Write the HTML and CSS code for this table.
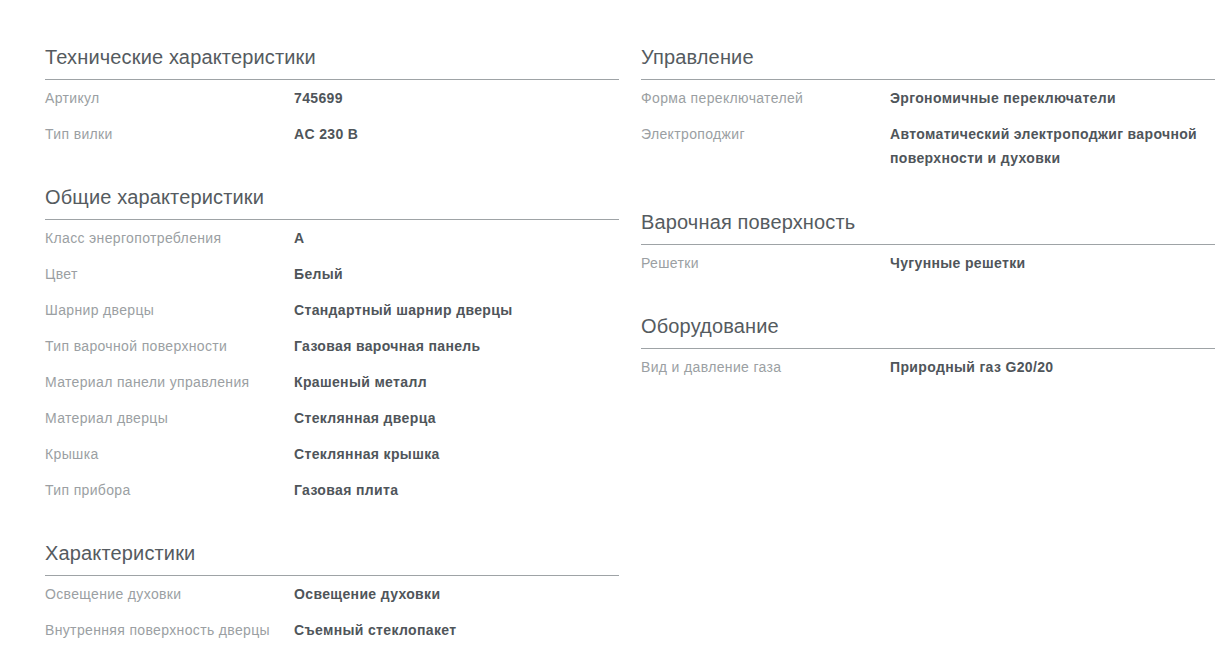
FILE: index.html
```html
<!DOCTYPE html>
<html lang="ru">
<head>
<meta charset="utf-8">
<title>Характеристики</title>
<link rel="stylesheet" href="styles.css">
</head>
<body>
<div class="specs">
  <div class="col">
    <section class="group">
      <h2 class="group-title">Технические характеристики</h2>
      <div class="row"><div class="label">Артикул</div><div class="value">745699</div></div>
      <div class="row"><div class="label">Тип вилки</div><div class="value">AC 230 B</div></div>
    </section>
    <section class="group">
      <h2 class="group-title">Общие характеристики</h2>
      <div class="row"><div class="label">Класс энергопотребления</div><div class="value">A</div></div>
      <div class="row"><div class="label">Цвет</div><div class="value">Белый</div></div>
      <div class="row"><div class="label">Шарнир дверцы</div><div class="value">Стандартный шарнир дверцы</div></div>
      <div class="row"><div class="label">Тип варочной поверхности</div><div class="value">Газовая варочная панель</div></div>
      <div class="row"><div class="label">Материал панели управления</div><div class="value">Крашеный металл</div></div>
      <div class="row"><div class="label">Материал дверцы</div><div class="value">Стеклянная дверца</div></div>
      <div class="row"><div class="label">Крышка</div><div class="value">Стеклянная крышка</div></div>
      <div class="row"><div class="label">Тип прибора</div><div class="value">Газовая плита</div></div>
    </section>
    <section class="group">
      <h2 class="group-title">Характеристики</h2>
      <div class="row"><div class="label">Освещение духовки</div><div class="value">Освещение духовки</div></div>
      <div class="row"><div class="label">Внутренняя поверхность дверцы</div><div class="value">Съемный стеклопакет</div></div>
    </section>
  </div>
  <div class="col">
    <section class="group">
      <h2 class="group-title">Управление</h2>
      <div class="row"><div class="label">Форма переключателей</div><div class="value">Эргономичные переключатели</div></div>
      <div class="row row--multi"><div class="label">Электроподжиг</div><div class="value">Автоматический электроподжиг варочной поверхности и духовки</div></div>
    </section>
    <section class="group">
      <h2 class="group-title">Варочная поверхность</h2>
      <div class="row"><div class="label">Решетки</div><div class="value">Чугунные решетки</div></div>
    </section>
    <section class="group">
      <h2 class="group-title">Оборудование</h2>
      <div class="row"><div class="label">Вид и давление газа</div><div class="value">Природный газ G20/20</div></div>
    </section>
  </div>
</div>
</body>
</html>
```
FILE: styles.css
```css
html, body {
  margin: 0;
  padding: 0;
  background: #ffffff;
}
body {
  font-family: "Liberation Sans", Arial, sans-serif;
}
.specs {
  display: grid;
  grid-template-columns: 574px 574px;
  column-gap: 22px;
  padding: 12px 2px 0 45px;
}
.group {
  margin-top: 31px;
}
.group-title {
  margin: 0;
  font-size: 20px;
  font-weight: normal;
  line-height: 28px;
  letter-spacing: 0.15px;
  color: #555b60;
  padding-bottom: 8px;
  border-bottom: 1px solid #9ea3a6;
}
.row {
  display: flex;
  padding: 6px 0;
  font-size: 14px;
  line-height: 24px;
  letter-spacing: 0.35px;
}
.row--multi {
  padding-bottom: 7px;
}
.label {
  flex: 0 0 249px;
  color: #9b9fa3;
}
.value {
  flex: 1;
  font-weight: bold;
  color: #4f555a;
  padding-right: 10px;
}
```
